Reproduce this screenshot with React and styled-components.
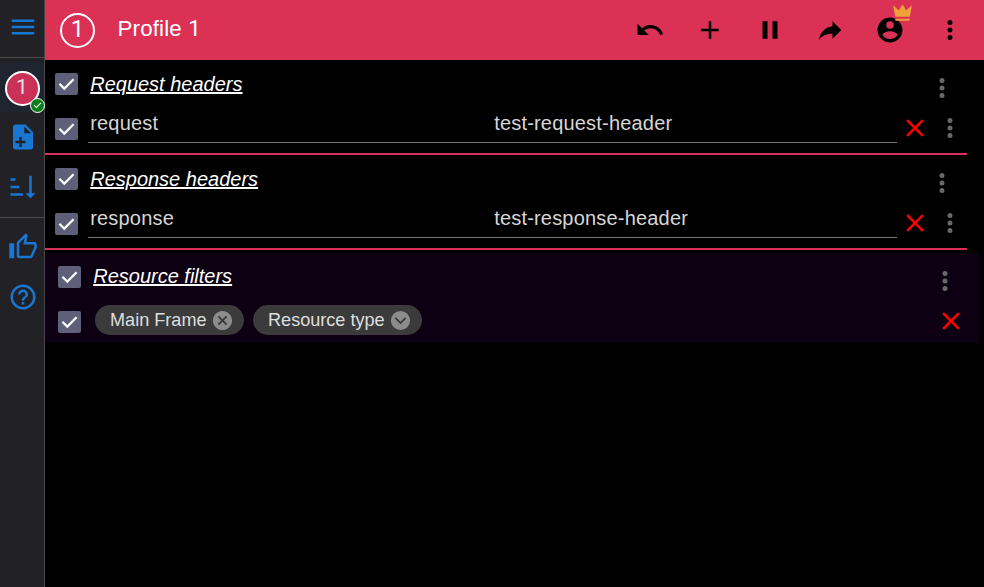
import React from 'react';
import styled, { createGlobalStyle } from 'styled-components';

const GlobalStyle = createGlobalStyle`
  * { box-sizing: border-box; }
  body {
    margin: 0;
    background: #000;
    color: #fff;
    font-family: "Liberation Sans", Arial, sans-serif;
    overflow: hidden;
  }
`;

const paths = {
  menu: 'M3,6H21V8H3V6M3,11H21V13H3V11M3,16H21V18H3V16Z',
  filePlus: 'M13,9H18.5L13,3.5V9M6,2H14L20,8V20A2,2 0 0,1 18,22H6C4.89,22 4,21.1 4,20V4C4,2.89 4.89,2 6,2M11,15V12H9V15H6V17H9V20H11V17H14V15H11Z',
  sort: 'M19 17H22L18 21L14 17H17V3H19M2 17H12V19H2M6 5V7H2V5M2 11H9V13H2V11Z',
  thumb: 'M5,9V21H1V9H5M9,21A2,2 0 0,1 7,19V9C7,8.45 7.22,7.95 7.59,7.59L14.17,1L15.23,2.06C15.5,2.33 15.67,2.7 15.67,3.11L15.64,3.43L14.69,8H21C22.11,8 23,8.9 23,10V12C23,12.26 22.95,12.5 22.86,12.73L19.84,19.78C19.54,20.5 18.83,21 18,21H9M9,19H18.03L21,12V10H12.21L13.34,4.68L9,9.03V19Z',
  help: 'M11,18H13V16H11V18M12,2A10,10 0 0,0 2,12A10,10 0 0,0 12,22A10,10 0 0,0 22,12A10,10 0 0,0 12,2M12,20C7.59,20 4,16.41 4,12C4,7.59 7.59,4 12,4C16.41,4 20,7.59 20,12C20,16.41 16.41,20 12,20M12,6A4,4 0 0,0 8,10H10A2,2 0 0,1 12,8A2,2 0 0,1 14,10C14,12 11,11.75 11,15H13C13,12.75 16,12.5 16,10A4,4 0 0,0 12,6Z',
  undo: 'M12.5 8c-2.65 0-5.05.99-6.9 2.6L2 7v9h9l-3.62-3.62c1.39-1.16 3.16-1.88 5.12-1.88 3.54 0 6.55 2.31 7.6 5.5l2.37-.78C21.08 11.03 17.15 8 12.5 8z',
  plus: 'M19,13H13V19H11V13H5V11H11V5H13V11H19V13Z',
  pause: 'M14,19H18V5H14M6,19H10V5H6V19Z',
  share: 'M21,12L14,5V9C7,10 4,15 3,20C5.5,16.5 9,14.9 14,14.9V19L21,12Z',
  account: 'M12,19.2C9.5,19.2 7.29,17.92 6,16C6.03,14 10,12.9 12,12.9C14,12.9 17.97,14 18,16C16.71,17.92 14.5,19.2 12,19.2M12,5A3,3 0 0,1 15,8A3,3 0 0,1 12,11A3,3 0 0,1 9,8A3,3 0 0,1 12,5M12,2A10,10 0 0,0 2,12A10,10 0 0,0 12,22A10,10 0 0,0 22,12C22,6.47 17.5,2 12,2Z',
  crown: 'M5 16L3 5L8.5 10L12 4L15.5 10L21 5L19 16H5M19 19C19 19.6 18.6 20 18 20H6C5.4 20 5 19.6 5 19V18H19V19Z',
  dots: 'M12,16A2,2 0 0,1 14,18A2,2 0 0,1 12,20A2,2 0 0,1 10,18A2,2 0 0,1 12,16M12,10A2,2 0 0,1 14,12A2,2 0 0,1 12,14A2,2 0 0,1 10,12A2,2 0 0,1 12,10M12,4A2,2 0 0,1 14,6A2,2 0 0,1 12,8A2,2 0 0,1 10,6A2,2 0 0,1 12,4Z',
  close: 'M19,6.41L17.59,5L12,10.59L6.41,5L5,6.41L10.59,12L5,17.59L6.41,19L12,13.41L17.59,19L19,17.59L13.41,12L19,6.41Z',
  check: 'M10,17L5,12L6.41,10.58L10,14.17L17.59,6.58L19,8Z',
  closeCircle: 'M12,2C17.53,2 22,6.47 22,12C22,17.53 17.53,22 12,22C6.47,22 2,17.53 2,12C2,6.47 6.47,2 12,2M15.59,7L12,10.59L8.41,7L7,8.41L10.59,12L7,15.59L8.41,17L12,13.41L15.59,17L17,15.59L13.41,12L17,8.41L15.59,7Z',
  chevronCircle: 'M22,12A10,10 0 0,1 12,22A10,10 0 0,1 2,12A10,10 0 0,1 12,2A10,10 0 0,1 22,12M6,10L12,16L18,10L16.6,8.6L12,13.2L7.4,8.6L6,10Z',
};

const Svg = styled.svg`
  display: block;
  flex: none;
  width: ${(p) => p.$size}px;
  height: ${(p) => p.$size}px;
  fill: currentColor;
`;

function Icon({ name, size = 30 }) {
  return (
    <Svg viewBox="0 0 24 24" $size={size} aria-hidden="true">
      <path fillRule="evenodd" d={paths[name]} />
    </Svg>
  );
}

const Page = styled.div`
  display: flex;
  width: 100%;
  height: 100vh;
`;

const Sidebar = styled.nav`
  display: flex;
  flex-direction: column;
  flex: none;
  width: 45px;
  background: #222126;
  border-right: 1px solid #47464a;
`;

const SideGroup = styled.div`
  display: flex;
  flex-direction: column;
  padding-top: ${(p) => p.$top || 0}px;
  height: ${(p) => p.$height}px;
  border-bottom: ${(p) => (p.$last ? 'none' : '1px solid #4e4d51')};
`;

const SideButton = styled.button`
  display: flex;
  align-items: center;
  justify-content: center;
  flex: none;
  width: 44px;
  height: ${(p) => (p.$active ? 49 : 50)}px;
  padding: ${(p) => (p.$active ? '1px 0 0 0' : '0 0 0 2px')};
  border: 0;
  border-radius: 5px;
  background: ${(p) => (p.$active ? '#1f2530' : 'transparent')};
  color: #1976d2;
`;

const ProfileSlot = styled.span`
  position: relative;
  display: flex;
`;

const ProfileCircle = styled.span`
  display: flex;
  justify-content: center;
  width: 35px;
  height: 35px;
  line-height: ${(p) => (p.$large ? 29 : 29)}px;
  border: 2px solid #fff;
  border-radius: 50%;
  background: ${(p) => (p.$large ? 'transparent' : '#cb3157')};
  color: ${(p) => (p.$large ? '#fff' : '#e6dfe4')};
  font-family: Roboto, sans-serif;
  font-size: ${(p) => (p.$large ? 24 : 21)}px;
`;

const Status = styled.span`
  position: absolute;
  right: -5px;
  bottom: -7px;
  display: flex;
  align-items: center;
  justify-content: center;
  width: 15px;
  height: 15px;
  border: 1px solid #fff;
  border-radius: 50%;
  background: #0a7d18;
  color: #fff;
`;

const Main = styled.main`
  flex: 1;
  min-width: 0;
`;

const Header = styled.header`
  display: flex;
  align-items: center;
  height: 60px;
  padding: 0 4px 0 15px;
  background: #db3155;
`;

const Title = styled.h1`
  flex: 1;
  margin: 0 0 4px 22.5px;
  font-size: 22.3px;
  font-weight: 400;
  line-height: 30px;
  letter-spacing: 0.0075em;
`;

const Numeral = styled.span`
  font-family: Roboto, sans-serif;
`;

const ToolButton = styled.button`
  position: relative;
  display: flex;
  align-items: center;
  justify-content: center;
  width: 60px;
  height: 60px;
  padding: 0;
  border: 0;
  background: none;
  color: #000;
`;

const Crown = styled.span`
  position: absolute;
  left: 30px;
  top: 0;
  color: #eda338;
`;

const Section = styled.section`
  width: 922px;
  height: 95px;
  border-bottom: 2px solid #db3155;
`;

const FilterSection = styled.section`
  width: 934px;
  height: 90px;
  margin-top: 3px;
  padding-left: 3px;
  border-radius: 3px;
  background: #0d0013;
`;

const Row = styled.div`
  display: flex;
  align-items: center;
  height: ${(p) => p.$height}px;
  padding: ${(p) => p.$padding};
`;

const Box = styled.span`
  display: flex;
  align-items: center;
  justify-content: center;
  flex: none;
  width: 23px;
  height: 22px;
  margin-top: ${(p) => p.$drop || 0}px;
  border-radius: 2px;
  background: #5f5f79;
  color: #fff;
`;

const SectionTitle = styled.h2`
  flex: 1;
  margin: 0 0 ${(p) => p.$lift || 0}px 12.2px;
  font-size: 20px;
  font-weight: 400;
  font-style: italic;
  line-height: 24px;
  text-decoration: underline;
`;

const Field = styled.input`
  width: ${(p) => p.$width}px;
  height: 40px;
  margin: 0 0 11px;
  margin-left: ${(p) => p.$left || 0}px;
  padding: 2px 2px 0 2.2px;
  border: 0;
  border-bottom: 1px solid #767676;
  outline: 0;
  background: transparent;
  color: #d6d6d6;
  font: 20px "Liberation Sans", Arial, sans-serif;
  letter-spacing: 0.00938em;
`;

const Action = styled.button`
  display: flex;
  margin: ${(p) => p.$drop || 0}px 0 0 ${(p) => p.$left || 0}px;
  padding: 0;
  border: 0;
  background: none;
  color: ${(p) => (p.$danger ? '#f00' : '#696969')};
`;

const Chip = styled.span`
  display: flex;
  align-items: center;
  justify-content: space-between;
  width: ${(p) => p.$width}px;
  height: 30px;
  margin: 0 0 2px ${(p) => p.$left}px;
  padding: 0 10px 0 15px;
  border-radius: 15px;
  background: #3b3b3b;
  color: #dedede;
  font-size: 18.1px;
  line-height: 30px;
  white-space: nowrap;
  svg { color: #8c8c8c; }
`;

const Spacer = styled.span`
  flex: 1;
`;

function Checkbox({ drop }) {
  return (
    <Box role="checkbox" aria-checked="true" $drop={drop}>
      <Icon name="check" size={27} />
    </Box>
  );
}

function HeaderSection({ title, name, value }) {
  return (
    <Section>
      <Row $height={48} $padding="0 10px 0 10px">
        <Checkbox />
        <SectionTitle>{title}</SectionTitle>
        <Action $drop={8} aria-label="Section menu"><Icon name="dots" /></Action>
      </Row>
      <Row $height={40} $padding="0 0 0 10px">
        <Checkbox drop={2} />
        <Field $width={404} $left={10} defaultValue={name} aria-label="Name" />
        <Field $width={405} defaultValue={value} aria-label="Value" />
        <Action $danger $left={3} aria-label="Remove"><Icon name="close" /></Action>
        <Action $left={5} aria-label="Row menu"><Icon name="dots" /></Action>
      </Row>
    </Section>
  );
}

const tools = ['undo', 'plus', 'pause', 'share', 'account', 'dots'];

export default function App() {
  return (
    <>
      <GlobalStyle />
      <Page>
        <Sidebar>
          <SideGroup $height={58} $top={2}>
            <SideButton aria-label="Menu"><Icon name="menu" /></SideButton>
          </SideGroup>
          <SideGroup $height={160} $top={5}>
            <SideButton $active aria-label="Profile 1">
              <ProfileSlot>
                <ProfileCircle>1</ProfileCircle>
                <Status><Icon name="check" size={13} /></Status>
              </ProfileSlot>
            </SideButton>
            <SideButton aria-label="Add profile"><Icon name="filePlus" /></SideButton>
            <SideButton aria-label="Sort"><Icon name="sort" /></SideButton>
          </SideGroup>
          <SideGroup $height={120} $top={4} $last>
            <SideButton aria-label="Rate"><Icon name="thumb" /></SideButton>
            <SideButton aria-label="Help"><Icon name="help" /></SideButton>
          </SideGroup>
        </Sidebar>
        <Main>
          <Header>
            <ProfileCircle $large>1</ProfileCircle>
            <Title>Profile <Numeral>1</Numeral></Title>
            {tools.map((name) => (
              <ToolButton key={name} aria-label={name}>
                <Icon name={name} />
                {name === 'account' && <Crown><Icon name="crown" size={25} /></Crown>}
              </ToolButton>
            ))}
          </Header>
          <HeaderSection title="Request headers" name="request" value="test-request-header" />
          <HeaderSection title="Response headers" name="response" value="test-response-header" />
          <FilterSection>
            <Row $height={48} $padding="0 19px 0 10px">
              <Checkbox />
              <SectionTitle $lift={2}>Resource filters</SectionTitle>
              <Action $drop={8} aria-label="Section menu"><Icon name="dots" /></Action>
            </Row>
            <Row $height={40} $padding="0 13px 0 10px">
              <Checkbox drop={2} />
              <Chip $width={149} $left={14}>Main Frame<Icon name="closeCircle" size={23} /></Chip>
              <Chip $width={169} $left={9}>Resource type<Icon name="chevronCircle" size={23} /></Chip>
              <Spacer />
              <Action $danger aria-label="Remove"><Icon name="close" /></Action>
            </Row>
          </FilterSection>
        </Main>
      </Page>
    </>
  );
}
